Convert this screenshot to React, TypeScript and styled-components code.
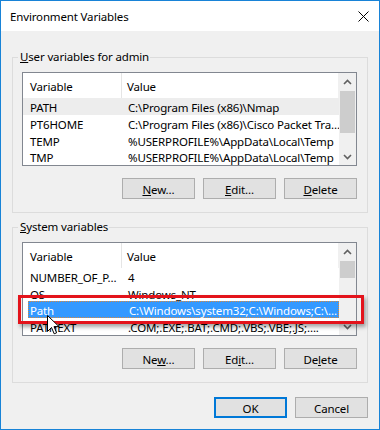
import React from "react";
import styled, { createGlobalStyle } from "styled-components";

const FONT = `"Noto Sans", "Open Sans", sans-serif`;

const Global = createGlobalStyle`
  html, body { margin: 0; padding: 0; background: #fff; }
  body { font-family: ${FONT}; }
`;

const Window = styled.div`
  position: relative;
  width: 380px;
  height: 430px;
  box-sizing: border-box;
  border: 1px solid #1883d7;
  background: #f0f0f0;
  display: flex;
  flex-direction: column;
  font-family: ${FONT};
  font-size: 11.5px;
  letter-spacing: -0.15px;
  color: #000;
`;

const TitleBar = styled.div`
  height: 30px;
  flex: none;
  background: #fff;
  display: flex;
  align-items: center;
  justify-content: space-between;
  padding-left: 9px;
`;

const Title = styled.span`
  color: #000;
  padding-top: 1px;
`;

const Close = styled.div`
  width: 11px;
  height: 11px;
  margin-right: 10px;
  display: flex;
`;

const Content = styled.div`
  flex: 1;
  display: flex;
  flex-direction: column;
  padding: 19px 11px 0 11px;
`;

const Group = styled.fieldset`
  margin: 0;
  padding: 8px 10px 13px 9px;
  border: 1px solid #dcdcdc;
  min-width: 0;
  display: flex;
  flex-direction: column;
  gap: 12px;
  & + & {
    margin-top: 7px;
  }
`;

const Legend = styled.legend`
  padding: 0 1px 0 2px;
  margin-left: -4px;
  line-height: 14px;
`;

const ListBox = styled.div`
  height: 94px;
  box-sizing: border-box;
  border: 1px solid #828790;
  background: #fff;
  display: flex;
`;

const ListBody = styled.div`
  flex: 1;
  min-width: 0;
  overflow: hidden;
  display: flex;
  flex-direction: column;
`;

const Header = styled.div`
  height: 25px;
  flex: none;
  display: grid;
  grid-template-columns: 99px 1fr;
`;

const HeaderCell = styled.div<{ $first?: boolean }>`
  display: flex;
  align-items: center;
  padding-top: 2px;
  padding-left: ${(p) => (p.$first ? 7 : 5)}px;
  border-right: 1px solid ${(p) => (p.$first ? "#e5e5e5" : "#f0f0f0")};
  white-space: nowrap;
`;

type RowKind = "normal" | "inactive" | "selected";

const Row = styled.div<{ $kind: RowKind }>`
  height: 16.67px;
  flex: none;
  box-sizing: border-box;
  display: grid;
  align-items: center;
  padding-top: ${(p) => (p.$kind === "selected" ? 2 : 3)}px;
  white-space: nowrap;
  grid-template-columns: ${(p) => (p.$kind === "selected" ? "94px 1fr" : "99px 1fr")};
  margin-left: ${(p) => (p.$kind === "selected" ? 5 : 0)}px;
  background: ${(p) =>
    p.$kind === "selected" ? "#3399ff" : p.$kind === "inactive" ? "#ededed" : "transparent"};
  color: ${(p) => (p.$kind === "selected" ? "#fff" : "#000")};
  border: ${(p) => (p.$kind === "selected" ? "1px dotted #d9893a" : "none")};
`;

const Cell = styled.div<{ $first?: boolean; $selected?: boolean }>`
  overflow-x: clip;
  overflow-y: visible;
  line-height: 13px;
  padding-left: ${(p) => (p.$first ? (p.$selected ? 1 : 7) : 6)}px;
`;

const ScrollBar = styled.div`
  width: 17px;
  flex: none;
  background: #f0f0f0;
  display: flex;
  flex-direction: column;
`;

const ArrowBox = styled.div`
  height: 17px;
  flex: none;
  display: flex;
  align-items: center;
  justify-content: center;
`;

const Thumb = styled.div<{ $h: number }>`
  height: ${(p) => p.$h}px;
  margin: 1px 1px 0 1px;
  background: #cdcdcd;
  flex: none;
`;

const Track = styled.div`
  flex: 1;
`;

const ButtonRow = styled.div`
  display: flex;
  justify-content: flex-end;
  gap: 8px;
`;

const Footer = styled(ButtonRow)`
  margin-top: 14px;
`;

const Button = styled.button<{ $default?: boolean }>`
  width: 73px;
  height: 21px;
  box-sizing: border-box;
  padding: 1px 0 0;
  background: #e1e1e1;
  border: ${(p) => (p.$default ? "2px solid #0078d7" : "1px solid #adadad")};
  font-family: ${FONT};
  font-size: 11.5px;
  letter-spacing: -0.15px;
  color: #000;
  border-radius: 0;
`;

const Callout = styled.div`
  position: absolute;
  left: 17px;
  top: 294px;
  width: 346px;
  height: 29px;
  box-sizing: border-box;
  border: 3px solid #e3131b;
  box-shadow: 2px 3px 4px rgba(0, 0, 0, 0.35);
  pointer-events: none;
`;

const Cursor = styled.svg`
  position: absolute;
  left: 46px;
  top: 314px;
`;

const Chevron = ({ up }: { up?: boolean }) => (
  <svg width="9" height="6" viewBox="0 0 9 6">
    <path
      d={up ? "M1 5 L4.5 1.5 L8 5" : "M1 1 L4.5 4.5 L8 1"}
      fill="none"
      stroke="#606060"
      strokeWidth="1.6"
    />
  </svg>
);

type Item = { name: string; value: string; kind?: RowKind };

const List = ({ items, thumb }: { items: Item[]; thumb: number }) => (
  <ListBox>
    <ListBody>
      <Header>
        <HeaderCell $first>Variable</HeaderCell>
        <HeaderCell>Value</HeaderCell>
      </Header>
      {items.map((it) => {
        const kind = it.kind ?? "normal";
        return (
          <Row key={it.name} $kind={kind}>
            <Cell $first $selected={kind === "selected"}>
              {it.name}
            </Cell>
            <Cell>{it.value}</Cell>
          </Row>
        );
      })}
    </ListBody>
    <ScrollBar>
      <ArrowBox>
        <Chevron up />
      </ArrowBox>
      <Thumb $h={thumb} />
      <Track />
      <ArrowBox>
        <Chevron />
      </ArrowBox>
    </ScrollBar>
  </ListBox>
);

const userVars: Item[] = [
  { name: "PATH", value: "C:\\Program Files (x86)\\Nmap", kind: "inactive" },
  { name: "PT6HOME", value: "C:\\Program Files (x86)\\Cisco Packet Tra…" },
  { name: "TEMP", value: "%USERPROFILE%\\AppData\\Local\\Temp" },
  { name: "TMP", value: "%USERPROFILE%\\AppData\\Local\\Temp" },
];

const sysVars: Item[] = [
  { name: "NUMBER_OF_P…", value: "4" },
  { name: "OS", value: "Windows_NT" },
  { name: "Path", value: "C:\\Windows\\system32;C:\\Windows;C:\\…", kind: "selected" },
  { name: "PATHEXT", value: ".COM;.EXE;.BAT;.CMD;.VBS;.VBE;.JS;…." },
];

export default function App() {
  return (
    <>
      <Global />
      <Window>
        <TitleBar>
          <Title>Environment Variables</Title>
          <Close>
            <svg width="11" height="11" viewBox="0 0 11 11">
              <path d="M0.5 0.5 L10.5 10.5 M10.5 0.5 L0.5 10.5" stroke="#000" strokeWidth="1" />
            </svg>
          </Close>
        </TitleBar>
        <Content>
          <Group>
            <Legend>
              <u>U</u>ser variables for admin
            </Legend>
            <List items={userVars} thumb={42} />
            <ButtonRow>
              <Button>
                <u>N</u>ew…
              </Button>
              <Button>
                <u>E</u>dit…
              </Button>
              <Button>
                <u>D</u>elete
              </Button>
            </ButtonRow>
          </Group>
          <Group>
            <Legend>
              <u>S</u>ystem variables
            </Legend>
            <List items={sysVars} thumb={17} />
            <ButtonRow>
              <Button>
                Ne<u>w</u>…
              </Button>
              <Button>
                Ed<u>i</u>t…
              </Button>
              <Button>
                De<u>l</u>ete
              </Button>
            </ButtonRow>
          </Group>
          <Footer>
            <Button $default>OK</Button>
            <Button>Cancel</Button>
          </Footer>
        </Content>
        <Callout />
        <Cursor width="13" height="20" viewBox="0 0 13 20">
          <path
            d="M0.5 0.5 L0.5 16.5 L4.5 12.5 L7.2 18.8 L9.6 17.8 L7 11.6 L12 11.6 Z"
            fill="#fff"
            stroke="#000"
            strokeWidth="1"
            strokeLinejoin="round"
          />
        </Cursor>
      </Window>
    </>
  );
}
